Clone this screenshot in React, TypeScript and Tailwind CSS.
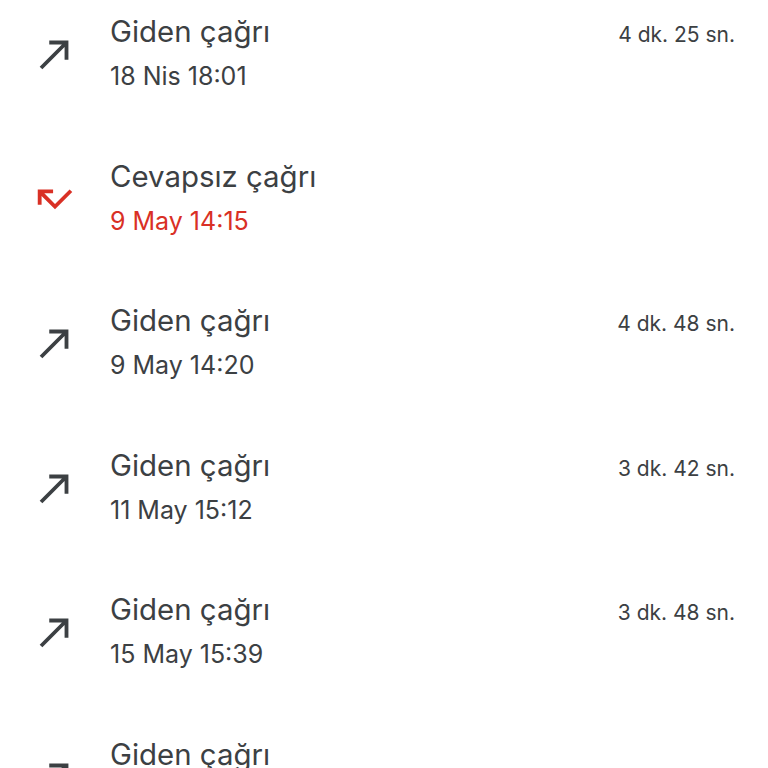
import React from "react";

type Call = { missed?: boolean; date: string; dur?: string };

const calls: Call[] = [
  { date: "18 Nis 18:01", dur: "4 dk. 25 sn." },
  { missed: true, date: "9 May 14:15" },
  { date: "9 May 14:20", dur: "4 dk. 48 sn." },
  { date: "11 May 15:12", dur: "3 dk. 42 sn." },
  { date: "15 May 15:39", dur: "3 dk. 48 sn." },
  { date: "15 May 16:02" },
];

function Made() {
  return (
    <svg viewBox="0 0 24 24" className="w-[46px] h-[46px]" fill="#3c4043">
      <path d="M9 5v2h6.59L4 18.59 5.41 20 17 8.41V15h2V5z" />
    </svg>
  );
}

function Missed() {
  return (
    <svg viewBox="0 0 24 24" className="w-[46px] h-[46px]" fill="#d93025">
      <path d="M19.59 7L12 14.59 6.41 9H11V7H3v8h2v-4.59l7 7 9-9z" />
    </svg>
  );
}

export default function App() {
  return (
    <div className="w-[768px] h-[768px] overflow-hidden bg-white" style={{ fontFamily: "Inter, Roboto, 'Liberation Sans', sans-serif" }}>
      <div className="mt-[-18px]">
        {calls.map((c, i) => (
          <div key={i} className="h-[144.5px] flex items-center pl-[32px] pr-[33px]">
            <div className="w-[78px] flex items-center">{c.missed ? <Missed /> : <Made />}</div>
            <div className="flex-1 flex flex-col">
              <div className="text-[29.4px] leading-[42px] text-[#3c4043]">{c.missed ? "Cevapsız çağrı" : "Giden çağrı"}</div>
              <div className={"text-[25px] leading-[42px] mt-[2px] " + (c.missed ? "text-[#d93025]" : "text-[#3c4043]")}>{c.date}</div>
            </div>
            {c.dur && <div className="self-start mt-[38px] text-[21px] leading-[30px] text-[#3c4043]">{c.dur}</div>}
          </div>
        ))}
      </div>
    </div>
  );
}
